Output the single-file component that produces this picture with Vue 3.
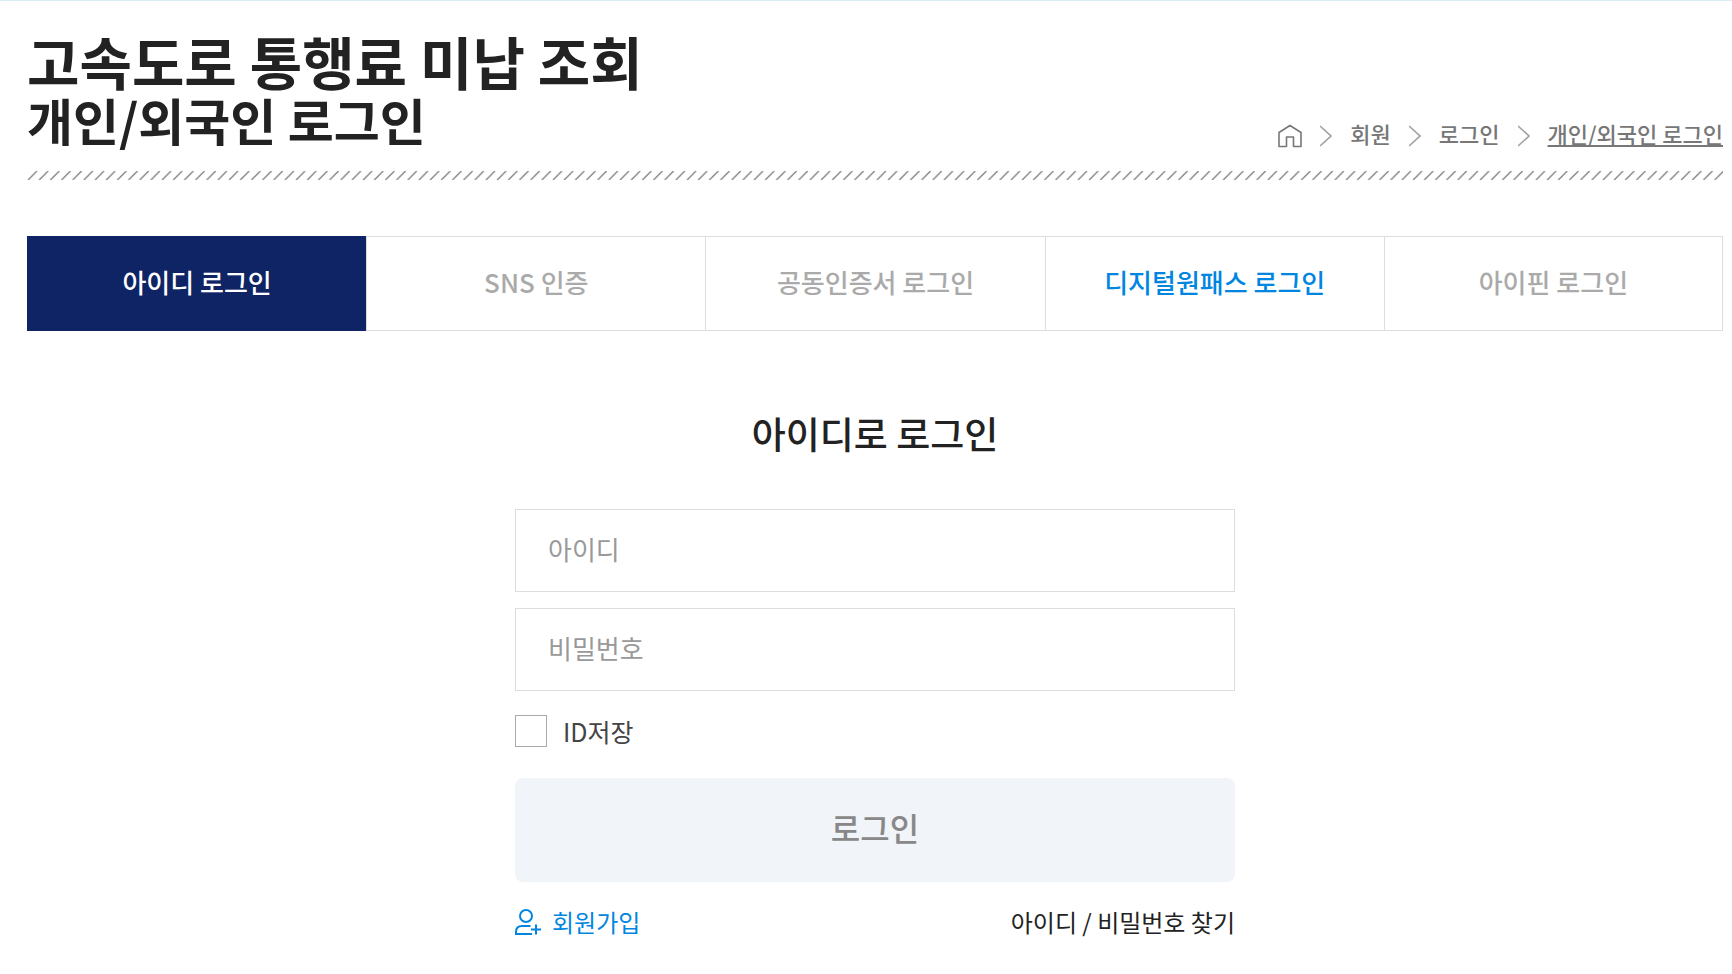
<script setup>
import { ref } from 'vue'

const crumbs = ['회원', '로그인']
const tabs = [
  { label: '아이디 로그인', active: true },
  { label: 'SNS 인증' },
  { label: '공동인증서 로그인' },
  { label: '디지털원패스 로그인', accent: true },
  { label: '아이핀 로그인' },
]
const userId = ref('')
const password = ref('')
const saveId = ref(false)
</script>

<template>
  <div class="page">
    <header class="head">
      <div class="titles">
        <h1>고속도로 통행료 미납 조회</h1>
        <h2>개인/외국인 로그인</h2>
      </div>
      <nav class="crumbs" aria-label="breadcrumb">
        <a href="#" class="home" aria-label="홈">
          <svg width="24" height="24" viewBox="0 0 24 24" fill="none" stroke="#777" stroke-width="1.6" stroke-linejoin="round">
            <path d="M1 22.500V8.500L12 1.500L23 8.500V22.500H15.500V13H8.500V22.500Z" />
          </svg>
        </a>
        <template v-for="c in crumbs" :key="c">
          <svg width="12" height="22" viewBox="0 0 12 22" fill="none" stroke="#a0a0a0" stroke-width="1.6"><path d="M0 1L11 11L0 21" /></svg>
          <a href="#" class="crumb">{{ c }}</a>
        </template>
        <svg width="12" height="22" viewBox="0 0 12 22" fill="none" stroke="#a0a0a0" stroke-width="1.6"><path d="M0 1L11 11L0 21" /></svg>
        <a href="#" class="crumb current" aria-current="page">개인/외국인 로그인</a>
      </nav>
    </header>
    <svg class="hatch" width="100%" height="9" aria-hidden="true">
      <defs>
        <pattern id="hatch" width="11.17" height="9" patternUnits="userSpaceOnUse">
          <path d="M1 9L10 0" stroke="#8c8c8c" stroke-width="1.5" />
        </pattern>
      </defs>
      <rect width="100%" height="9" fill="url(#hatch)" />
    </svg>

    <nav class="tabs">
      <a v-for="t in tabs" :key="t.label" href="#" :class="{ active: t.active, accent: t.accent }">{{ t.label }}</a>
    </nav>

    <form class="login" @submit.prevent>
      <h3>아이디로 로그인</h3>
      <input v-model="userId" class="field" type="text" placeholder="아이디" aria-label="아이디" />
      <input v-model="password" class="field" type="password" placeholder="비밀번호" aria-label="비밀번호" />
      <div class="save">
        <input id="save-id" v-model="saveId" type="checkbox" />
        <label for="save-id">ID저장</label>
      </div>
      <button type="submit">로그인</button>
      <div class="links">
        <a href="#" class="join">
          <svg width="27" height="27" viewBox="0 0 27 27" fill="none" stroke="#0086e0" stroke-width="2">
            <circle cx="11" cy="7" r="6" />
            <path d="M17 25H1V23Q1 17 7 17H15.500M21 15.500V25.500M16 20.500H26" />
          </svg>
          회원가입
        </a>
        <a href="#">아이디 / 비밀번호 찾기</a>
      </div>
    </form>
  </div>
</template>

<style>
body {
  margin: 0;
  background: #fff;
}
</style>

<style scoped>
.page {
  border-top: 1px solid #d9edf8;
  padding: 28px 9px 32px 27px;
  font-family: "Noto Sans CJK KR", sans-serif;
  color: #222;
}
* {
  box-sizing: border-box;
}
a {
  color: inherit;
  text-decoration: none;
}
h1, h2, h3 {
  margin: 0;
  font-weight: 700;
}
.head {
  display: flex;
  justify-content: space-between;
  align-items: flex-end;
}
.titles {
  padding-bottom: 7px;
}
h1 {
  font-size: 57px;
  line-height: 62px;
}
h2 {
  font-size: 50px;
  line-height: 56px;
}
.crumbs {
  display: flex;
  align-items: center;
  gap: 18px;
  color: #777;
  font-size: 22px;
  font-weight: 500;
  line-height: 30px;
}
.crumbs svg {
  display: block;
}
.crumb {
  padding-bottom: 6px;
}
.current {
  text-decoration: underline;
}
.hatch {
  display: block;
  margin-top: 17px;
}
.tabs {
  display: grid;
  grid-template-columns: repeat(5, 1fr);
  margin-top: 56px;
}
.tabs a {
  display: flex;
  align-items: center;
  justify-content: center;
  height: 95px;
  padding-bottom: 5px;
  border: 1px solid #ddd;
  border-right-width: 0;
  font-size: 26px;
  font-weight: 500;
  color: #aaa;
}
.tabs a:last-child {
  border-right-width: 1px;
}
.tabs a.accent {
  color: #0086e0;
}
.tabs a.active {
  border-color: #0f2465;
  background: #0f2465;
  color: #fff;
}
.login {
  display: flex;
  flex-direction: column;
  width: 100%;
  max-width: 720px;
  margin: 75px auto 0;
}
h3 {
  text-align: center;
  font-size: 37px;
  font-weight: 500;
  line-height: 54px;
  margin-bottom: 49px;
}
.field {
  height: 83px;
  margin-bottom: 16px;
  padding: 0 32px 4px;
  border: 1px solid #ddd;
  background: #fff;
  font: 400 26px "Noto Sans CJK KR", sans-serif;
}
.field::placeholder {
  color: #999;
  opacity: 1;
}
.save {
  display: flex;
  align-items: center;
  gap: 16px;
  margin: 8px 0 31px;
  font-size: 25px;
  line-height: 32px;
  color: #444;
}
.save input {
  appearance: none;
  width: 32px;
  height: 32px;
  margin: 0;
  border: 1px solid #aaa;
}
.save input:checked {
  background: #0f2465;
}
button {
  height: 104px;
  padding: 0 0 6px;
  border: 0;
  border-radius: 8px;
  background: #f1f5f9;
  color: #888;
  font: 500 32px "Noto Sans CJK KR", sans-serif;
}
.links {
  display: flex;
  justify-content: space-between;
  margin-top: 24px;
  font-size: 24px;
  line-height: 32px;
}
.join {
  display: flex;
  align-items: center;
  gap: 10px;
  color: #0086e0;
}
</style>
